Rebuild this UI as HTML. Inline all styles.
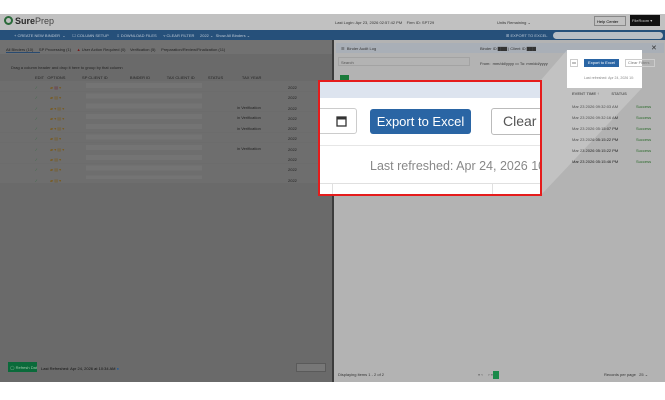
<!DOCTYPE html>
<html><head><meta charset="utf-8"><style>
*{margin:0;padding:0;box-sizing:border-box}
body{width:665px;height:400px;background:#fff;font-family:"Liberation Sans",sans-serif;position:relative;overflow:hidden}
.a{position:absolute}
.t{font-size:4px;color:#333;white-space:nowrap}
</style></head><body>
<div class="a" style="left:0;top:14px;width:665px;height:16px;background:#c1c1c1"></div>
<div class="a" style="left:4px;top:16px;width:9px;height:9px;border-radius:50%;border:2px solid #2a6a3a"></div>
<div class="a" style="left:15px;top:16px;font-size:9px;font-weight:bold;color:#2a2a2a">Sure<span style="color:#444;font-weight:normal">Prep</span></div>
<div class="a t" style="left:335px;top:20px">Last Login: Apr 23, 2026 02:57:42 PM &nbsp;&nbsp; Firm ID: SPT29</div>
<div class="a t" style="left:497px;top:20px">Units Remaining ⌄</div>
<div class="a" style="left:594px;top:16px;width:32px;height:10px;border:1px solid #888;font-size:4px;padding:2px;white-space:nowrap">Help Center</div>
<div class="a" style="left:630px;top:15px;width:30px;height:11px;background:#111;color:#ccc;font-size:4px;padding:3px 2px;white-space:nowrap">FileRoom ▾</div>
<div class="a" style="left:0;top:30px;width:665px;height:10px;background:#26507a"></div>
<div class="a t" style="left:14px;top:33px;color:#bcc8d6">+ CREATE NEW BINDER &nbsp;⌄ &nbsp;&nbsp;&nbsp;&nbsp; ☐ COLUMN SETUP &nbsp;&nbsp;&nbsp;&nbsp;&nbsp; ⇩ DOWNLOAD FILES &nbsp;&nbsp;&nbsp;&nbsp; ▿ CLEAR FILTER &nbsp;&nbsp;&nbsp;&nbsp;2022 ⌄ &nbsp;Show All Binders ⌄</div>
<div class="a t" style="left:506px;top:33px;color:#bcc8d6">⊞ EXPORT TO EXCEL</div>
<div class="a" style="left:553px;top:32px;width:110px;height:7px;border-radius:4px;background:#b9bec4"></div>
<div class="a" style="left:0;top:40px;width:332px;height:342px;background:#6a6a6a"></div>
<div class="a" style="left:0;top:40px;width:332px;height:14px;background:#717171"></div>
<div class="a t" style="left:6px;top:47px;color:#222">All Binders (10) &nbsp;&nbsp;&nbsp; SP Processing (1) &nbsp;&nbsp;&nbsp; <span style="color:#7a1a1a">▲</span> User Action Required (0) &nbsp;&nbsp; Verification (5) &nbsp;&nbsp;&nbsp; Preparation/Review/Finalization (11)</div>
<div class="a" style="left:6px;top:52px;width:34px;height:1px;background:#284a70"></div>
<div class="a t" style="left:11px;top:65px;color:#222">Drag a column header and drop it here to group by that column</div>
<div class="a t" style="left:35px;top:75px;color:#222">EDIT &nbsp;&nbsp;OPTIONS &nbsp;&nbsp;&nbsp;&nbsp;&nbsp;&nbsp;&nbsp;&nbsp;&nbsp;&nbsp;&nbsp;&nbsp;&nbsp; SP CLIENT ID &nbsp;&nbsp;&nbsp;&nbsp;&nbsp;&nbsp;&nbsp;&nbsp;&nbsp;&nbsp;&nbsp;&nbsp;&nbsp;&nbsp;&nbsp;&nbsp;&nbsp;&nbsp; BINDER ID &nbsp;&nbsp;&nbsp;&nbsp;&nbsp;&nbsp;&nbsp;&nbsp;&nbsp;&nbsp;&nbsp;&nbsp;&nbsp; TAX CLIENT ID &nbsp;&nbsp;&nbsp;&nbsp;&nbsp;&nbsp;&nbsp;&nbsp;&nbsp;&nbsp; STATUS &nbsp;&nbsp;&nbsp;&nbsp;&nbsp;&nbsp;&nbsp;&nbsp;&nbsp;&nbsp;&nbsp;&nbsp;&nbsp;&nbsp;&nbsp; TAX YEAR</div>
<div class="a" style="left:0;top:81px;width:332px;height:102px;background:repeating-linear-gradient(#6e6e6e 0 10px,#6a6a6a 10px 10.3px)"></div>
<div class="a" style="left:86px;top:83px;width:116px;height:96px;background:repeating-linear-gradient(#747474 0 5px,transparent 5px 10.3px)"></div>
<div class="a t" style="left:288px;top:83px;line-height:10.3px;color:#222">2022<br>2022<br>2022<br>2022<br>2022<br>2022<br>2022<br>2022<br>2022<br>2022</div>
<div class="a t" style="left:237px;top:103px;line-height:10.3px;color:#222">in Verification<br>in Verification<br>in Verification<br><br>in Verification</div>
<div class="a t" style="left:50px;top:83px;line-height:10.3px;color:#7a5a1a">▰ <span style="color:#6b2b3b">▤</span> ▾<br>▰ ▤ ▾<br>▰ ▾ ▤ ▾<br>▰ ▾ ▤ ▾<br>▰ ▾ ▤ ▾<br>▰ ▤ ▾<br>▰ ▾ ▤ ▾<br>▰ ▤ ▾<br>▰ ▤ ▾<br>▰ ▤ ▾</div>
<div class="a t" style="left:36px;top:83px;line-height:10.3px;color:#2a6a3a">⁄<br>⁄<br>⁄<br>⁄<br>⁄<br>⁄<br>⁄<br>⁄<br>⁄<br>⁄</div>
<div class="a" style="left:8px;top:362px;width:29px;height:10px;background:#0a6a3a;color:#9fc8aa;font-size:4px;padding:3px 2px;white-space:nowrap;overflow:hidden">◯ Refresh Data</div>
<div class="a t" style="left:41px;top:366px;color:#111">Last Refreshed: Apr 24, 2026 at 10:34 AM <span style="color:#1f5a9a">●</span></div>
<div class="a" style="left:296px;top:363px;width:30px;height:9px;background:#777;border:1px solid #5a5a5a"></div>
<div class="a" style="left:332px;top:40px;width:2px;height:342px;background:#3c3c3c"></div>
<div class="a" style="left:334px;top:40px;width:331px;height:342px;background:#b3b3b3"></div>
<div class="a" style="left:336px;top:43px;width:328px;height:10px;background:#a9afb7"></div>
<div class="a t" style="left:341px;top:46px">☰ &nbsp;Binder Audit Log</div>
<div class="a t" style="left:480px;top:46px">Binder ID ▇▇▇ | Client ID ▇▇▇</div>
<div class="a" style="left:651px;top:44px;font-size:7px;color:#333">✕</div>
<div class="a" style="left:338px;top:57px;width:132px;height:9px;border:1px solid #a3a3a3;font-size:4px;padding:2px;color:#555">Search</div>
<div class="a t" style="left:480px;top:61px">From: &nbsp;mm/dd/yyyy ▭ To: mm/dd/yyyy</div>
<div class="a" style="left:340px;top:75px;width:9px;height:6px;background:#1a7a3a"></div>
<div class="a t" style="left:572px;top:91px;font-weight:bold">EVENT TIME ↑ &nbsp;&nbsp;&nbsp;&nbsp;&nbsp;&nbsp;&nbsp;&nbsp;&nbsp; STATUS</div>
<div class="a t" style="left:572px;top:101px;line-height:11px;color:#222">Mar 23 2026 09:32:03 AM<br>Mar 23 2026 09:32:16 AM<br>Mar 23 2026 05:15:07 PM<br>Mar 23 2026 05:15:22 PM<br>Mar 23 2026 05:15:22 PM<br>Mar 23 2026 05:15:46 PM</div>
<div class="a t" style="left:636px;top:101px;line-height:11px;color:#2a6a2a">Success<br>Success<br>Success<br>Success<br>Success<br>Success</div>
<div class="a t" style="left:338px;top:372px">Displaying items 1 - 2 of 2</div>
<div class="a t" style="left:478px;top:372px">« ‹ &nbsp;&nbsp;&nbsp; › »</div>
<div class="a" style="left:493px;top:371px;width:6px;height:8px;background:#1a8a4a"></div>
<div class="a t" style="left:604px;top:372px">Records per page &nbsp;&nbsp;25 ⌄</div>
<svg class="a" style="left:0;top:0" width="665" height="400"><polygon points="567,50 642,50 642,88 541,195 541,80" fill="rgba(255,255,255,0.2)"/></svg>
<div class="a" style="left:567px;top:50px;width:75px;height:38px;background:#fff"></div>
<div class="a" style="left:570px;top:59px;width:8px;height:8px;border:1px solid #ccc;font-size:4px;text-align:center">▭</div>
<div class="a" style="left:584px;top:59px;width:35px;height:8px;background:#2a65a4;color:#fff;font-size:4px;text-align:center;line-height:8px;white-space:nowrap">Export to Excel</div>
<div class="a" style="left:625px;top:59px;width:30px;height:8px;border:1px solid #ccc;color:#777;font-size:4px;line-height:6px;padding-left:2px;white-space:nowrap">Clear Filters</div>
<div class="a" style="left:584px;top:76px;font-size:3.5px;color:#888;white-space:nowrap">Last refreshed: Apr 24, 2026 10:</div>
<div class="a" style="left:318px;top:80px;width:224px;height:116px;border:2px solid #e51c1c;background:#fff;overflow:hidden">
 <div class="a" style="left:0;top:0;width:224px;height:16px;background:#dde4ef"></div>
 <div class="a" style="left:-10px;top:26px;width:47px;height:26px;border:1px solid #ccc;border-radius:3px"></div>
 <svg class="a" style="left:16px;top:33px" width="11" height="12"><rect x="1" y="2" width="9" height="9" fill="none" stroke="#333" stroke-width="1.3"/><rect x="1" y="2" width="9" height="2.5" fill="#333"/></svg>
 <div class="a" style="left:50px;top:27px;width:101px;height:25px;background:#2a65a4;border-radius:3px;color:#fff;font-size:13px;text-align:center;line-height:25px;white-space:nowrap">Export to Excel</div>
 <div class="a" style="left:171px;top:26px;width:70px;height:27px;border:1px solid #bbb;border-radius:3px;color:#555;font-size:14px;line-height:25px;padding-left:11px;white-space:nowrap">Clear F</div>
 <div class="a" style="left:0;top:63px;width:224px;height:1px;background:#e6e6e6"></div>
 <div class="a" style="left:50px;top:77px;font-size:12.5px;color:#888;white-space:nowrap">Last refreshed: Apr 24, 2026 10:3</div>
 <div class="a" style="left:0;top:101px;width:224px;height:1px;background:#e0e0e0"></div>
 <div class="a" style="left:12px;top:101px;width:1px;height:14px;background:#e0e0e0"></div>
 <div class="a" style="left:172px;top:101px;width:1px;height:14px;background:#e0e0e0"></div>
</div>
<div class="a" style="left:0;top:382px;width:665px;height:18px;background:#fff"></div>
</body></html>
